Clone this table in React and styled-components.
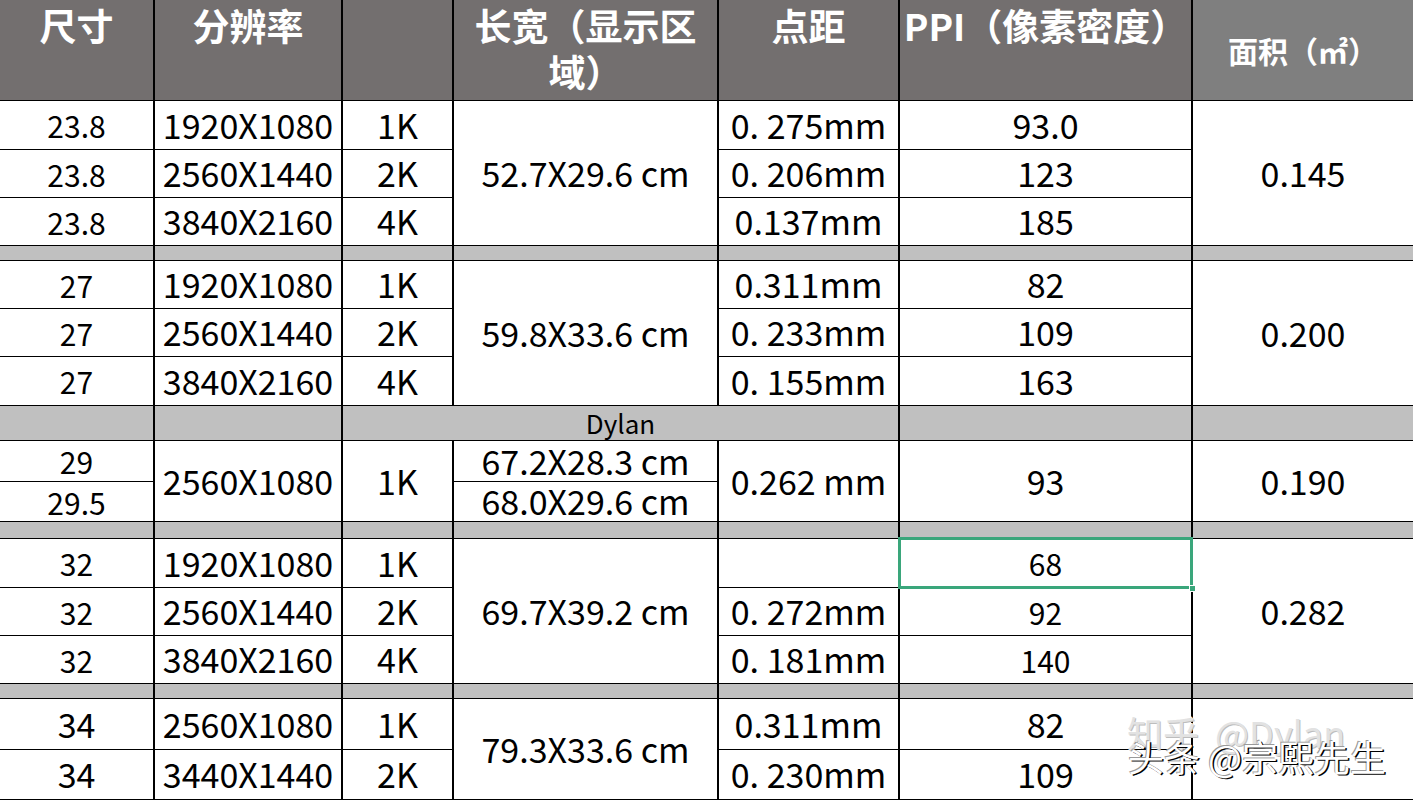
import React from "react";
import styled, { createGlobalStyle, css } from "styled-components";

const GlobalStyle = createGlobalStyle`
  html, body { margin: 0; padding: 0; background: #ffffff; }
  body { overflow: hidden; font-family: "Noto Sans CJK SC", "Noto Sans", sans-serif; }
`;

const Page = styled.div`
  position: relative;
  width: 1413px;
  height: 800px;
  overflow: hidden;
  background: #ffffff;
`;

const Sheet = styled.div`
  display: grid;
  grid-template-columns: 153px 186px 109px 263px 179px 291px 220px;
  grid-template-rows: 100px 48px 47px 47px 14px 47px 47px 48px 34px 40px 39px 16px 48px 47px 47px 14px 50px 49px;
  column-gap: 2px;
  row-gap: 1px;
  padding-bottom: 1px;
  background: #000000;
  font-family: "Noto Sans CJK SC", "Noto Sans", sans-serif;
`;

const place = css`
  grid-row: ${(p) => p.$r} / span ${(p) => p.$rs || 1};
  grid-column: ${(p) => p.$c} / span ${(p) => p.$cs || 1};
`;

const HeadCell = styled.div`
  ${place};
  display: flex;
  flex-direction: column;
  align-items: center;
  justify-content: ${(p) => (p.$middle ? "center" : "flex-start")};
  padding-top: ${(p) => (p.$middle ? "0" : "1px")};
  background: ${(p) => (p.$light ? "#7f7f7f" : "#736f6f")};
  color: #ffffff;
  font-weight: 700;
  font-size: ${(p) => (p.$small ? "30px" : "37px")};
  line-height: ${(p) => (p.$small ? "40px" : "48px")};
  text-align: center;
  white-space: nowrap;
`;

const HeadLine = styled.span`
  display: block;
  margin-top: ${(p) => (p.$tight ? "-2px" : "0")};
`;

const sizes = { big: "34px", small: "30px", tiny: "26px" };

const Cell = styled.div`
  ${place};
  position: relative;
  display: flex;
  align-items: center;
  justify-content: center;
  background: ${(p) => (p.$gray ? "#c0c0c0" : "#ffffff")};
  color: #000000;
  font-size: ${(p) => sizes[p.$size || "big"]};
  line-height: 1.2;
  white-space: nowrap;
  ${(p) =>
    p.$selected &&
    css`
      z-index: 2;
      outline: 2px solid #3aa67b;
      box-shadow: inset 0 0 0 1px #3aa67b;
      &::after {
        content: "";
        position: absolute;
        right: -5px;
        bottom: -5px;
        width: 5px;
        height: 5px;
        background: #3aa67b;
        border: 1px solid #ffffff;
      }
    `}
`;

const Watermark = styled.div`
  position: absolute;
  left: ${(p) => p.$x}px;
  top: ${(p) => p.$y}px;
  font-family: "Noto Sans CJK SC", "Noto Sans", sans-serif;
  font-size: ${(p) => p.$size}px;
  line-height: 1;
  white-space: nowrap;
  pointer-events: none;
  ${(p) =>
    p.$faint
      ? css`
          color: #e2e2e2;
          word-spacing: 8px;
          text-shadow: 1px 1px 0 #bdbdbd, -1px -1px 0 #ffffff;
        `
      : css`
          color: #ffffff;
          text-shadow: 1.5px 1px 0 #000000, -1px -1px 0 #9a9a9a;
        `}
`;

const groups = [
  {
    start: 2,
    size: "23.8",
    sizeStyle: "small",
    res: ["1920X1080", "2560X1440", "3840X2160"],
    k: ["1K", "2K", "4K"],
    dims: "52.7X29.6 cm",
    pitch: ["0. 275mm", "0. 206mm", "0.137mm"],
    ppi: ["93.0", "123", "185"],
    area: "0.145",
  },
  {
    start: 6,
    size: "27",
    sizeStyle: "small",
    res: ["1920X1080", "2560X1440", "3840X2160"],
    k: ["1K", "2K", "4K"],
    dims: "59.8X33.6 cm",
    pitch: ["0.311mm", "0. 233mm", "0. 155mm"],
    ppi: ["82", "109", "163"],
    area: "0.200",
  },
  {
    start: 13,
    size: "32",
    sizeStyle: "small",
    res: ["1920X1080", "2560X1440", "3840X2160"],
    k: ["1K", "2K", "4K"],
    dims: "69.7X39.2 cm",
    pitch: ["", "0. 272mm", "0. 181mm"],
    ppi: ["68", "92", "140"],
    ppiStyle: "small",
    selected: 0,
    area: "0.282",
  },
  {
    start: 17,
    size: "34",
    sizeStyle: "big",
    res: ["2560X1080", "3440X1440"],
    k: ["1K", "2K"],
    dims: "79.3X33.6 cm",
    pitch: ["0.311mm", "0. 230mm"],
    ppi: ["82", "109"],
    area: "",
  },
];

function Group({ g }) {
  const n = g.res.length;
  const cells = [];
  g.res.forEach((res, i) => {
    const r = g.start + i;
    cells.push(
      <Cell key={`s${i}`} $r={r} $c={1} $size={g.sizeStyle}>{g.size}</Cell>,
      <Cell key={`r${i}`} $r={r} $c={2}>{res}</Cell>,
      <Cell key={`k${i}`} $r={r} $c={3}>{g.k[i]}</Cell>,
      <Cell key={`p${i}`} $r={r} $c={5}>{g.pitch[i]}</Cell>,
      <Cell key={`i${i}`} $r={r} $c={6} $size={g.ppiStyle} $selected={g.selected === i}>
        {g.ppi[i]}
      </Cell>
    );
  });
  cells.push(
    <Cell key="d" $r={g.start} $rs={n} $c={4}>{g.dims}</Cell>,
    <Cell key="a" $r={g.start} $rs={n} $c={7}>{g.area}</Cell>
  );
  return cells;
}

function GraySeparator({ row }) {
  return [1, 2, 3, 4, 5, 6, 7].map((c) => <Cell key={`g${row}-${c}`} $r={row} $c={c} $gray />);
}

export default function App() {
  return (
    <Page>
      <GlobalStyle />
      <Sheet>
        <HeadCell $r={1} $c={1}>尺寸</HeadCell>
        <HeadCell $r={1} $c={2}>分辨率</HeadCell>
        <HeadCell $r={1} $c={3}></HeadCell>
        <HeadCell $r={1} $c={4}>
          <HeadLine>长宽（显示区</HeadLine>
          <HeadLine $tight>域）</HeadLine>
        </HeadCell>
        <HeadCell $r={1} $c={5}>点距</HeadCell>
        <HeadCell $r={1} $c={6}>PPI（像素密度）</HeadCell>
        <HeadCell $r={1} $c={7} $light $middle $small>面积（㎡）</HeadCell>

        <Group g={groups[0]} />
        <GraySeparator row={5} />
        <Group g={groups[1]} />

        <Cell $r={9} $c={1} $gray />
        <Cell $r={9} $c={2} $gray />
        <Cell $r={9} $c={3} $cs={3} $gray $size="tiny">Dylan</Cell>
        <Cell $r={9} $c={6} $gray />
        <Cell $r={9} $c={7} $gray />

        <Cell $r={10} $c={1} $size="small">29</Cell>
        <Cell $r={11} $c={1} $size="small">29.5</Cell>
        <Cell $r={10} $rs={2} $c={2}>2560X1080</Cell>
        <Cell $r={10} $rs={2} $c={3}>1K</Cell>
        <Cell $r={10} $c={4}>67.2X28.3 cm</Cell>
        <Cell $r={11} $c={4}>68.0X29.6 cm</Cell>
        <Cell $r={10} $rs={2} $c={5}>0.262 mm</Cell>
        <Cell $r={10} $rs={2} $c={6}>93</Cell>
        <Cell $r={10} $rs={2} $c={7}>0.190</Cell>

        <GraySeparator row={12} />
        <Group g={groups[2]} />
        <GraySeparator row={16} />
        <Group g={groups[3]} />
      </Sheet>
      <Watermark $faint $x={1127} $y={714} $size={36}>知乎 @Dylan</Watermark>
      <Watermark $x={1128} $y={738} $size={36}>头条 @宗熙先生</Watermark>
    </Page>
  );
}
